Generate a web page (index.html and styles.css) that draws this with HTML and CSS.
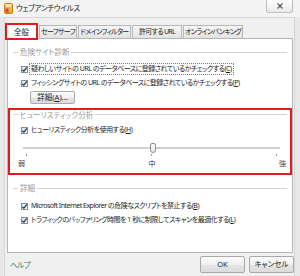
FILE: index.html
```html
<!DOCTYPE html>
<html lang="ja">
<head>
<meta charset="utf-8">
<title>ウェブアンチウイルス</title>
<link rel="stylesheet" href="styles.css">
</head>
<body>
<div class="window">
  <div class="titlebar">
    <svg class="appicon" width="9" height="11" viewBox="0 0 9 11">
      <defs>
        <linearGradient id="gold" x1="0" y1="0" x2="0" y2="1">
          <stop offset="0" stop-color="#fbd56a"/>
          <stop offset="1" stop-color="#e39a2a"/>
        </linearGradient>
      </defs>
      <rect x="0.5" y="0.5" width="8" height="10" rx="1" fill="url(#gold)" stroke="#c7801e"/>
      <rect x="1.5" y="5.5" width="3" height="4" fill="#d8452a"/>
      <rect x="2" y="1.5" width="5" height="2" fill="#fff4c8"/>
    </svg>
    <span class="title">ウェブアンチウイルス</span>
    <div class="close">
      <svg width="6" height="6" viewBox="0 0 6 6"><path d="M0.5 0.5L5.5 5.5M5.5 0.5L0.5 5.5" stroke="#555" stroke-width="1.1"/></svg>
    </div>
  </div>
  <div class="client">
    <div class="tabs">
      <div class="tab active">全般</div>
      <div class="tab t-safe">セーフサーフ</div>
      <div class="tab t-domain">ドメインフィルター</div>
      <div class="tab t-url">許可する URL</div>
      <div class="tab t-bank">オンラインバンキング</div>
    </div>
    <div class="panel">
      <div class="group g1">
        <div class="legend"><span>危険サイト診断</span></div>
        <div class="check first"><span class="box"><svg width="7" height="7" viewBox="0 0 7 7"><path d="M1.2 3.6L2.8 5.2L5.9 1.3" fill="none" stroke="#24407a" stroke-width="1.3"/></svg></span><span class="label focus">疑わしいサイトの URL のデータベースに登録されているかチェックする(<u>C</u>)</span></div>
        <div class="check"><span class="box"><svg width="7" height="7" viewBox="0 0 7 7"><path d="M1.2 3.6L2.8 5.2L5.9 1.3" fill="none" stroke="#24407a" stroke-width="1.3"/></svg></span><span class="label">フィッシングサイトの URL のデータベースに登録されているかチェックする(<u>P</u>)</span></div>
        <button class="btn detail">詳細(<u>A</u>)...</button>
      </div>
      <div class="group g2">
        <div class="legend"><span>ヒューリスティック分析</span></div>
        <div class="check"><span class="box"><svg width="7" height="7" viewBox="0 0 7 7"><path d="M1.2 3.6L2.8 5.2L5.9 1.3" fill="none" stroke="#24407a" stroke-width="1.3"/></svg></span><span class="label">ヒューリスティック分析を使用する(<u>H</u>)</span></div>
        <div class="slider">
          <div class="track"></div>
          <div class="ticks"><i></i><i></i><i></i></div>
          <div class="thumb"></div>
        </div>
        <div class="scale"><span>弱</span><span>中</span><span>強</span></div>
      </div>
      <div class="group g3">
        <div class="legend"><span>詳細</span></div>
        <div class="check"><span class="box"><svg width="7" height="7" viewBox="0 0 7 7"><path d="M1.2 3.6L2.8 5.2L5.9 1.3" fill="none" stroke="#24407a" stroke-width="1.3"/></svg></span><span class="label">Microsoft Internet Explorer の危険なスクリプトを禁止する(<u>B</u>)</span></div>
        <div class="check"><span class="box"><svg width="7" height="7" viewBox="0 0 7 7"><path d="M1.2 3.6L2.8 5.2L5.9 1.3" fill="none" stroke="#24407a" stroke-width="1.3"/></svg></span><span class="label">トラフィックのバッファリング時間を 1 秒に制限してスキャンを最適化する(<u>L</u>)</span></div>
      </div>
    </div>
    <div class="footer">
      <span class="help">ヘルプ</span>
      <button class="btn dlg">OK</button>
      <button class="btn dlg">キャンセル</button>
    </div>
  </div>
</div>
</body>
</html>
```

FILE: styles.css
```css
* { box-sizing: border-box; }
html, body {
  margin: 0;
  width: 300px;
  height: 276px;
  overflow: hidden;
}
body {
  font-family: "Noto Sans", "Noto Sans CJK JP", sans-serif;
  font-size: 7px;
  letter-spacing: -0.5px;
  color: #1e1e1e;
  font-feature-settings: "palt" 1;
  background: #e6e6e6;
}
.window {
  height: 276px;
  display: flex;
  flex-direction: column;
  background: #e8e8e8;
}
.titlebar {
  height: 17px;
  flex: none;
  display: flex;
  align-items: center;
  padding-left: 4px;
  background: #f3f3f3;
}
.appicon { display: block; }
.title {
  margin-left: 3px;
  font-size: 7.5px;
  letter-spacing: -0.3px;
  color: #222;
  line-height: 17px;
}
.close {
  margin-left: auto;
  margin-right: 7px;
  align-self: flex-start;
  width: 27px;
  height: 13px;
  border: 1px solid #bdbdbd;
  border-top: 0;
  border-radius: 0 0 3px 3px;
  background: linear-gradient(#ffffff, #eaeaea);
  display: flex;
  align-items: center;
  justify-content: center;
}
.close svg { display: block; }
.client {
  flex: 1;
  margin: 0 5px 0 4px;
  background: #f0f0f0;
  border: 1px solid #d6d6d6;
  border-bottom: 0;
  padding: 5px 0 0 0;
  display: flex;
  flex-direction: column;
}
.tabs {
  height: 15px;
  display: flex;
  align-items: flex-end;
  position: relative;
  z-index: 2;
}
.tab {
  height: 13px;
  margin-right: 1px;
  border: 1px solid #b7b7b7;
  border-bottom: 0;
  background: linear-gradient(#f6f6f6, #e3e3e3);
  line-height: 12px;
  white-space: nowrap;
  color: #222;
  display: flex;
  justify-content: center;
  font-size: 7px;
  letter-spacing: -0.7px;
}
.t-safe { width: 38px; }
.t-domain { width: 53px; }
.t-url { width: 50px; }
.t-bank { width: 60px; }
.tab.active {
  height: 17px;
  margin-bottom: -2px;
  width: 33px;
  background: #fff;
  border: 2px solid #e51a1e;
  line-height: 14px;
  letter-spacing: 0;
  font-size: 7.5px;
}
.panel {
  height: 215px;
  margin: 0 1px 0 2px;
  background: #fff;
  border: 1px solid #b5b5b5;
  display: flex;
  flex-direction: column;
}
.legend {
  height: 10px;
  line-height: 10px;
  display: flex;
  align-items: center;
  color: #9a9a9a;
  margin-right: 5px;
  font-size: 7.5px;
  letter-spacing: 0;
}
.legend::before {
  content: "";
  width: 5px;
  height: 1px;
  background: #d4d4d4;
  margin-right: 2px;
}
.legend::after {
  content: "";
  flex: 1;
  height: 1px;
  background: #d4d4d4;
  margin-left: 2px;
}
.g1 { padding: 8px 0 0 5px; }
.g1 .legend { margin-bottom: 5px; }
.check {
  height: 14px;
  display: flex;
  align-items: center;
  padding-left: 8px;
  white-space: nowrap;
}
.box {
  width: 7px;
  height: 7px;
  border: 1px solid #8d8d8d;
  background: linear-gradient(#e6e6e6, #fafafa);
  position: relative;
  flex: none;
  margin-right: 2px;
}
.box svg {
  position: absolute;
  left: -1px;
  top: -1px;
}
.label { line-height: 10px; padding: 0 1px; }
.label.focus { outline: 1px dotted #7a7a7a; outline-offset: 0; }
u { text-decoration: underline; text-underline-offset: 1px; }
.btn {
  font: inherit;
  letter-spacing: inherit;
  color: #222;
  border: 1px solid #a9a9a9;
  border-radius: 2px;
  background: linear-gradient(#fbfbfb, #f0f0f0 50%, #e4e4e4 51%, #dcdcdc);
  padding: 0;
  line-height: 11px;
}
.detail {
  margin: 1px 0 0 17px;
  width: 45px;
  height: 13px;
  font-size: 7.5px;
  letter-spacing: 0;
}
.g2 {
  margin-top: 4px;
  border: 2px solid #e51a1e;
  height: 67px;
  padding-top: 0;
}
.g2 .legend { height: 9px; padding-left: 3px; margin-right: 3px; }
.g2 .check { margin-top: 4px; padding-left: 11px; }
.slider {
  position: relative;
  height: 21px;
  margin: 0 10px 0 13px;
}
.track {
  position: absolute;
  left: 0;
  right: 0;
  top: 10px;
  height: 2px;
  background: #cfcfcf;
}
.thumb {
  position: absolute;
  left: 127px;
  top: 6px;
  width: 6px;
  height: 10px;
  border: 1px solid #8c8c8c;
  border-radius: 2px 2px 3px 3px;
  background: linear-gradient(#ffffff, #e6e6e6);
}
.ticks {
  position: absolute;
  left: 3px;
  right: 3px;
  top: 17px;
  display: flex;
  justify-content: space-between;
}
.ticks i {
  width: 1px;
  height: 2px;
  background: #9a9a9a;
}
.scale {
  display: flex;
  justify-content: space-between;
  margin: 1px 4px 0 8px;
  font-size: 7px;
  letter-spacing: 0;
  line-height: 10px;
  color: #333;
}
.g3 { padding-left: 5px; margin-top: 8px; }
.g3 .legend { margin-bottom: 6px; }
.footer {
  flex: 1;
  display: flex;
  align-items: center;
  padding: 2px 0 3px 5px;
}
.help {
  color: #2f8578;
  margin-top: 1px;
  font-size: 7.5px;
}
.dlg {
  width: 45px;
  height: 17px;
  margin-left: 4px;
  letter-spacing: 0;
  font-size: 7.5px;
}
.dlg:first-of-type { margin-left: auto; }
```
